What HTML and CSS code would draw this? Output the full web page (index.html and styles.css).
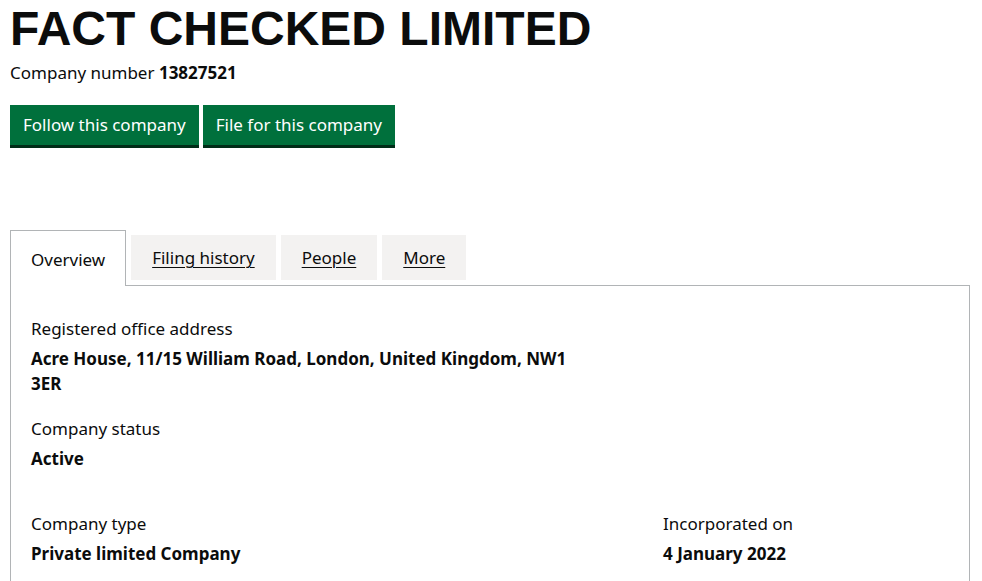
FILE: index.html
```html
<!DOCTYPE html>
<html lang="en">
<head>
<meta charset="utf-8">
<title>FACT CHECKED LIMITED</title>
<link rel="stylesheet" href="styles.css">
</head>
<body>
<main class="page">
  <h1 class="heading">FACT CHECKED LIMITED</h1>
  <p class="company-number">Company number <strong>13827521</strong></p>
  <div class="actions">
    <a class="button" href="#">Follow this company</a>
    <a class="button" href="#">File for this company</a>
  </div>
  <div class="tabs">
    <ul class="tab-list">
      <li class="tab tab-selected"><a href="#">Overview</a></li>
      <li class="tab"><a href="#">Filing history</a></li>
      <li class="tab"><a href="#">People</a></li>
      <li class="tab"><a href="#">More</a></li>
    </ul>
    <section class="panel">
      <dl class="summary">
        <dt>Registered office address</dt>
        <dd class="address">Acre House, 11/15 William Road, London, United Kingdom, NW1 3ER</dd>
        <dt>Company status</dt>
        <dd>Active</dd>
      </dl>
      <div class="pair">
        <dl class="summary">
          <dt>Company type</dt>
          <dd>Private limited Company</dd>
        </dl>
        <dl class="summary">
          <dt>Incorporated on</dt>
          <dd>4 January 2022</dd>
        </dl>
      </div>
    </section>
  </div>
</main>
</body>
</html>
```

FILE: styles.css
```css
* { box-sizing: border-box; }
html, body { margin: 0; padding: 0; background: #ffffff; }
body {
  font-family: "Noto Sans", Arial, sans-serif;
  color: #0b0c0c;
  font-size: 17px;
}
.page { padding: 0 12px 0 10px; }
.heading {
  font-family: "Liberation Sans", Arial, sans-serif;
  font-weight: 700;
  font-size: 48px;
  line-height: 56px;
  margin: 0;
  padding-top: 1px;
  color: #0b0c0c;
}
.company-number {
  margin: 4px 0 0 0;
  line-height: 24px;
  font-size: 17px;
}
.company-number strong { font-weight: 700; }
.actions {
  display: flex;
  gap: 4px;
  margin-top: 20px;
}
.button {
  display: inline-block;
  background: #00703c;
  color: #ffffff;
  text-decoration: none;
  font-size: 17px;
  line-height: 24px;
  padding: 8px 13px 8px 13px;
  box-shadow: 0 3px 0 #002d18;
}
.tabs { margin-top: 85px; }
.tab-list {
  list-style: none;
  margin: 0;
  padding: 0;
  display: flex;
  align-items: flex-start;
  gap: 5px;
}
.tab {
  background: #f3f2f1;
  margin-top: 5px;
  height: 45px;
  display: flex;
  align-items: center;
  padding: 0 21px;
}
.tab a {
  color: #0b0c0c;
  text-decoration: underline;
  text-underline-offset: 3px;
  text-decoration-thickness: 1px;
  font-size: 17px;
}
.tab-selected {
  background: #ffffff;
  margin-top: 0;
  height: 56px;
  border: 1px solid #b1b4b6;
  border-bottom: 0;
  padding: 17px 20px 0 20px;
  margin-bottom: -1px;
  position: relative;
  z-index: 1;
  align-items: flex-start;
}
.tab-selected a { text-decoration: none; }
.panel {
  border: 1px solid #b1b4b6;
  padding: 30px 20px 20px 20px;
  min-height: 320px;
}
.summary { margin: 0; }
.summary dt {
  font-size: 17px;
  line-height: 25px;
  margin: 0 0 5px 0;
}
.summary dd {
  margin: 0 0 20px 0;
  font-weight: 700;
  font-size: 17px;
  line-height: 25px;
}
.address { max-width: 560px; }
.pair {
  display: grid;
  grid-template-columns: 632px 1fr;
  margin-top: 40px;
}
```
